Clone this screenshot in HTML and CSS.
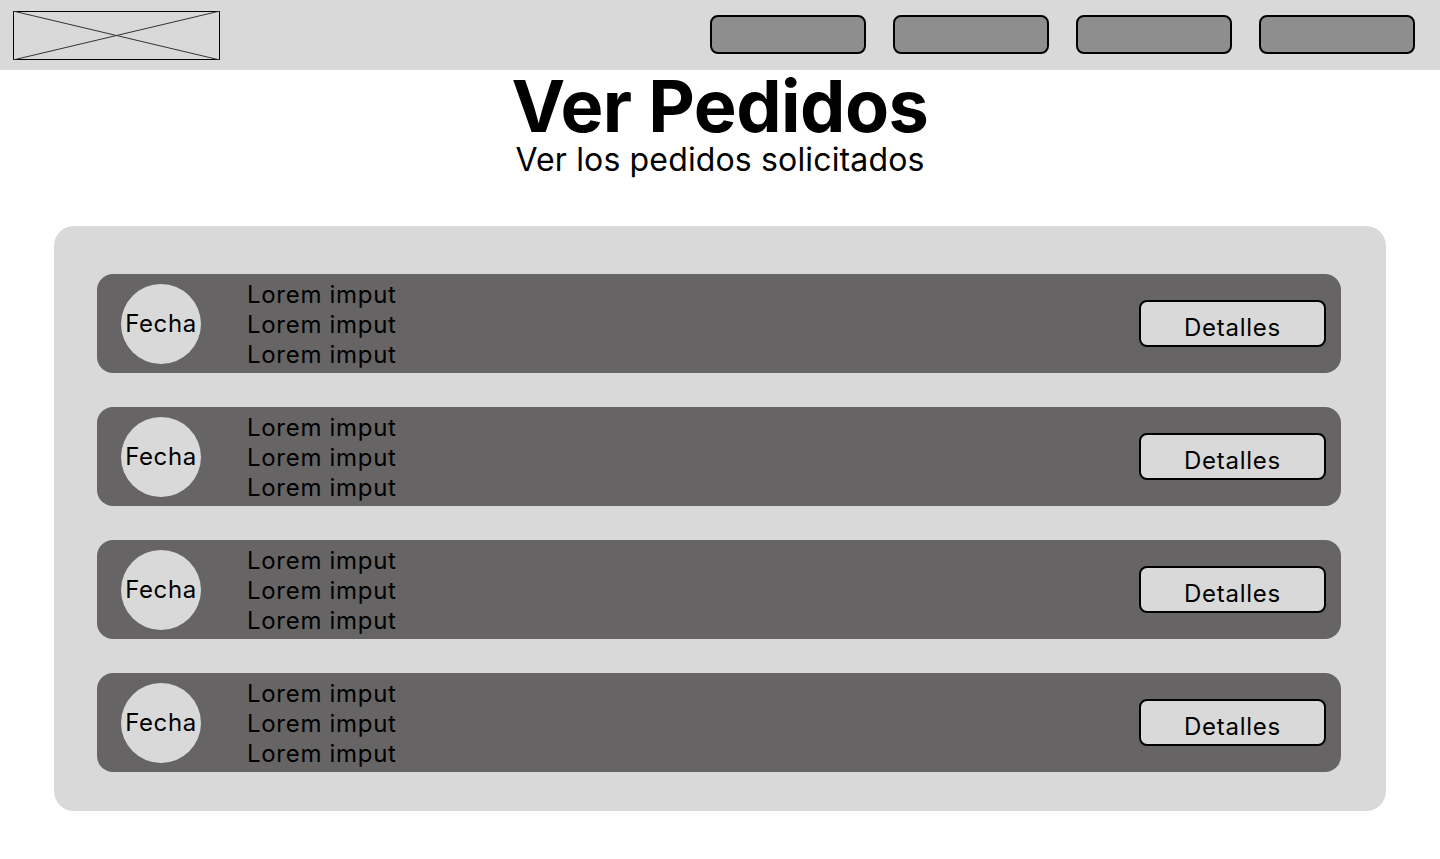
FILE: index.html
```html
<!DOCTYPE html>
<html lang="es">
<head>
<meta charset="utf-8">
<title>Ver Pedidos</title>
<link rel="stylesheet" href="styles.css">
</head>
<body>
<header class="topbar">
  <div class="logo">
    <svg width="207" height="49" viewBox="0 0 207 49" preserveAspectRatio="none">
      <rect x="0.5" y="0.5" width="206" height="48" fill="none" stroke="#000" stroke-width="1"/>
      <line x1="0" y1="0" x2="207" y2="49" stroke="#333" stroke-width="1"/>
      <line x1="0" y1="49" x2="207" y2="0" stroke="#333" stroke-width="1"/>
    </svg>
  </div>
  <nav class="nav">
    <span class="nav-btn"></span>
    <span class="nav-btn"></span>
    <span class="nav-btn"></span>
    <span class="nav-btn"></span>
  </nav>
</header>
<main class="main">
  <h1 class="title">Ver Pedidos</h1>
  <p class="subtitle">Ver los pedidos solicitados</p>
  <section class="panel">
    <div class="order">
      <div class="date">Fecha</div>
      <div class="lines"><span>Lorem imput</span><span>Lorem imput</span><span>Lorem imput</span></div>
      <button class="details">Detalles</button>
    </div>
    <div class="order">
      <div class="date">Fecha</div>
      <div class="lines"><span>Lorem imput</span><span>Lorem imput</span><span>Lorem imput</span></div>
      <button class="details">Detalles</button>
    </div>
    <div class="order">
      <div class="date">Fecha</div>
      <div class="lines"><span>Lorem imput</span><span>Lorem imput</span><span>Lorem imput</span></div>
      <button class="details">Detalles</button>
    </div>
    <div class="order">
      <div class="date">Fecha</div>
      <div class="lines"><span>Lorem imput</span><span>Lorem imput</span><span>Lorem imput</span></div>
      <button class="details">Detalles</button>
    </div>
  </section>
</main>
</body>
</html>
```
FILE: styles.css
```css
* { box-sizing: border-box; }
html, body { margin: 0; padding: 0; background: #fff; }
body { font-family: Inter, "Noto Sans", sans-serif; color: #000; width: 1440px; }

.topbar {
  height: 70px;
  background: #d9d9d9;
  display: flex;
  align-items: flex-start;
  justify-content: space-between;
  padding: 11px 25px 0 13px;
}
.logo { width: 207px; height: 49px; display: flex; }
.logo svg { display: block; }
.nav { display: flex; gap: 27px; padding-top: 4px; }
.nav-btn {
  display: block;
  width: 156px;
  height: 39px;
  background: #8e8e8e;
  border: 2px solid #000;
  border-radius: 8px;
}

.main { display: flex; flex-direction: column; align-items: center; }
.title {
  margin: 0;
  font-size: 72px;
  line-height: 72px;
  font-weight: 700;
  letter-spacing: -0.5px;
}
.subtitle {
  margin: 0 0 48px 0;
  font-size: 32px;
  line-height: 36px;
  font-weight: 400;
  letter-spacing: 0.15px;
}

.panel {
  width: 1332px;
  background: #d9d9d9;
  border-radius: 20px;
  padding: 48px 45px 39px 43px;
  display: flex;
  flex-direction: column;
  gap: 34px;
}
.order {
  height: 99px;
  background: #666465;
  border-radius: 16px;
  display: flex;
  align-items: center;
  padding: 0 15px 0 24px;
}
.date {
  width: 80px;
  height: 80px;
  border-radius: 50%;
  background: #d9d9d9;
  display: flex;
  align-items: center;
  justify-content: center;
  font-size: 24px;
  letter-spacing: 0.6px;
  color: #000;
  flex-shrink: 0;
}
.lines {
  margin-left: 46px;
  display: flex;
  flex-direction: column;
  font-size: 24px;
  line-height: 30px;
  letter-spacing: 0.7px;
  color: #000;
  flex: 1;
  padding-top: 2px;
}
.details {
  width: 187px;
  height: 47px;
  background: #d9d9d9;
  border: 2px solid #000;
  border-radius: 8px;
  font-family: Inter, "Noto Sans", sans-serif;
  font-size: 24px;
  letter-spacing: 0.75px;
  color: #000;
  padding: 9px 0 0 0;
  line-height: 30px;
}
```
